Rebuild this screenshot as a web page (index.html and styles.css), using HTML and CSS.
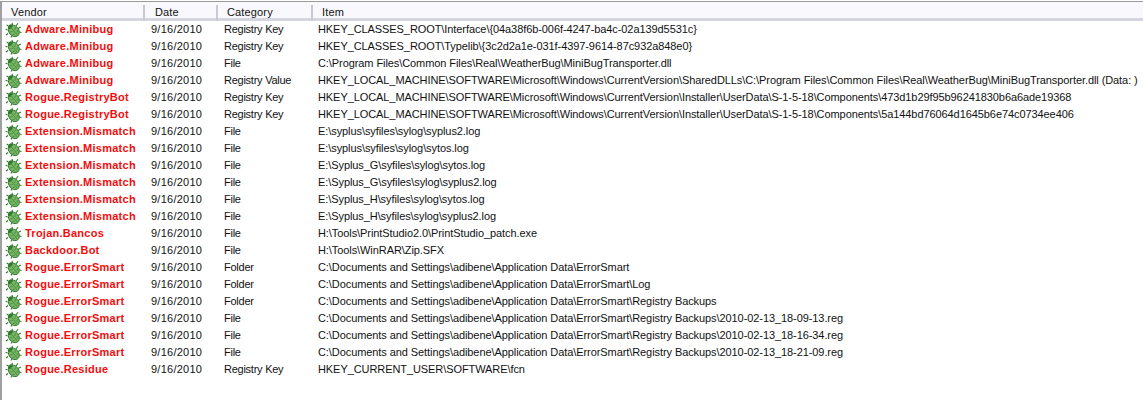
FILE: index.html
```html
<!DOCTYPE html>
<html>
<head>
<meta charset="utf-8">
<title>Scan results</title>
<link rel="stylesheet" href="styles.css">
</head>
<body>
<svg class="defs" width="0" height="0">
<symbol id="bug" viewBox="0 0 17 16">
<g stroke="#2f7a2f" stroke-width="1.1" fill="none">
<path d="M7.5 3L7 .8M11 4L13 1.2M13 6.5L15.8 5M14.5 10L16.5 10.5M2.5 8L.6 7.2M3 11.5L1 13M7 13.5L6 15.6M3.5 4L1.6 3"/>
</g>
<g transform="rotate(-40 8.5 8.5)">
<ellipse cx="8.5" cy="9" rx="4.9" ry="6.3" fill="#79b565" stroke="#2f7a2f" stroke-width=".9"/>
<ellipse cx="8.5" cy="3.4" rx="2.7" ry="1.9" fill="#2f7a2f"/>
<path d="M8.5 4V15" stroke="#3f8a3a" stroke-width=".8"/>
<path d="M5 7.5L7.2 8.8M5 11L7.2 12.2M12 7.5L9.8 8.8M12 11L9.8 12.2" stroke="#3f8a3a" stroke-width=".8"/>
</g>
</symbol>
</svg>
<div class="list">
<div class="row head">
<div class="c v">Vendor</div><div class="c d">Date</div><div class="c t">Category</div><div class="c i">Item</div>
</div>
<div class="row"><div class="c v"><svg class="ic"><use href="#bug"/></svg><b>Adware.Minibug</b></div><div class="c d">9/16/2010</div><div class="c t">Registry Key</div><div class="c i">HKEY_CLASSES_ROOT\Interface\{04a38f6b-006f-4247-ba4c-02a139d5531c}</div></div>
<div class="row"><div class="c v"><svg class="ic"><use href="#bug"/></svg><b>Adware.Minibug</b></div><div class="c d">9/16/2010</div><div class="c t">Registry Key</div><div class="c i">HKEY_CLASSES_ROOT\Typelib\{3c2d2a1e-031f-4397-9614-87c932a848e0}</div></div>
<div class="row"><div class="c v"><svg class="ic"><use href="#bug"/></svg><b>Adware.Minibug</b></div><div class="c d">9/16/2010</div><div class="c t">File</div><div class="c i">C:\Program Files\Common Files\Real\WeatherBug\MiniBugTransporter.dll</div></div>
<div class="row"><div class="c v"><svg class="ic"><use href="#bug"/></svg><b>Adware.Minibug</b></div><div class="c d">9/16/2010</div><div class="c t">Registry Value</div><div class="c i">HKEY_LOCAL_MACHINE\SOFTWARE\Microsoft\Windows\CurrentVersion\SharedDLLs\C:\Program Files\Common Files\Real\WeatherBug\MiniBugTransporter.dll (Data: )</div></div>
<div class="row"><div class="c v"><svg class="ic"><use href="#bug"/></svg><b>Rogue.RegistryBot</b></div><div class="c d">9/16/2010</div><div class="c t">Registry Key</div><div class="c i">HKEY_LOCAL_MACHINE\SOFTWARE\Microsoft\Windows\CurrentVersion\Installer\UserData\S-1-5-18\Components\473d1b29f95b96241830b6a6ade19368</div></div>
<div class="row"><div class="c v"><svg class="ic"><use href="#bug"/></svg><b>Rogue.RegistryBot</b></div><div class="c d">9/16/2010</div><div class="c t">Registry Key</div><div class="c i">HKEY_LOCAL_MACHINE\SOFTWARE\Microsoft\Windows\CurrentVersion\Installer\UserData\S-1-5-18\Components\5a144bd76064d1645b6e74c0734ee406</div></div>
<div class="row"><div class="c v"><svg class="ic"><use href="#bug"/></svg><b>Extension.Mismatch</b></div><div class="c d">9/16/2010</div><div class="c t">File</div><div class="c i">E:\syplus\syfiles\sylog\syplus2.log</div></div>
<div class="row"><div class="c v"><svg class="ic"><use href="#bug"/></svg><b>Extension.Mismatch</b></div><div class="c d">9/16/2010</div><div class="c t">File</div><div class="c i">E:\syplus\syfiles\sylog\sytos.log</div></div>
<div class="row"><div class="c v"><svg class="ic"><use href="#bug"/></svg><b>Extension.Mismatch</b></div><div class="c d">9/16/2010</div><div class="c t">File</div><div class="c i">E:\Syplus_G\syfiles\sylog\sytos.log</div></div>
<div class="row"><div class="c v"><svg class="ic"><use href="#bug"/></svg><b>Extension.Mismatch</b></div><div class="c d">9/16/2010</div><div class="c t">File</div><div class="c i">E:\Syplus_G\syfiles\sylog\syplus2.log</div></div>
<div class="row"><div class="c v"><svg class="ic"><use href="#bug"/></svg><b>Extension.Mismatch</b></div><div class="c d">9/16/2010</div><div class="c t">File</div><div class="c i">E:\Syplus_H\syfiles\sylog\sytos.log</div></div>
<div class="row"><div class="c v"><svg class="ic"><use href="#bug"/></svg><b>Extension.Mismatch</b></div><div class="c d">9/16/2010</div><div class="c t">File</div><div class="c i">E:\Syplus_H\syfiles\sylog\syplus2.log</div></div>
<div class="row"><div class="c v"><svg class="ic"><use href="#bug"/></svg><b>Trojan.Bancos</b></div><div class="c d">9/16/2010</div><div class="c t">File</div><div class="c i">H:\Tools\PrintStudio2.0\PrintStudio_patch.exe</div></div>
<div class="row"><div class="c v"><svg class="ic"><use href="#bug"/></svg><b>Backdoor.Bot</b></div><div class="c d">9/16/2010</div><div class="c t">File</div><div class="c i">H:\Tools\WinRAR\Zip.SFX</div></div>
<div class="row"><div class="c v"><svg class="ic"><use href="#bug"/></svg><b>Rogue.ErrorSmart</b></div><div class="c d">9/16/2010</div><div class="c t">Folder</div><div class="c i">C:\Documents and Settings\adibene\Application Data\ErrorSmart</div></div>
<div class="row"><div class="c v"><svg class="ic"><use href="#bug"/></svg><b>Rogue.ErrorSmart</b></div><div class="c d">9/16/2010</div><div class="c t">Folder</div><div class="c i">C:\Documents and Settings\adibene\Application Data\ErrorSmart\Log</div></div>
<div class="row"><div class="c v"><svg class="ic"><use href="#bug"/></svg><b>Rogue.ErrorSmart</b></div><div class="c d">9/16/2010</div><div class="c t">Folder</div><div class="c i">C:\Documents and Settings\adibene\Application Data\ErrorSmart\Registry Backups</div></div>
<div class="row"><div class="c v"><svg class="ic"><use href="#bug"/></svg><b>Rogue.ErrorSmart</b></div><div class="c d">9/16/2010</div><div class="c t">File</div><div class="c i">C:\Documents and Settings\adibene\Application Data\ErrorSmart\Registry Backups\2010-02-13_18-09-13.reg</div></div>
<div class="row"><div class="c v"><svg class="ic"><use href="#bug"/></svg><b>Rogue.ErrorSmart</b></div><div class="c d">9/16/2010</div><div class="c t">File</div><div class="c i">C:\Documents and Settings\adibene\Application Data\ErrorSmart\Registry Backups\2010-02-13_18-16-34.reg</div></div>
<div class="row"><div class="c v"><svg class="ic"><use href="#bug"/></svg><b>Rogue.ErrorSmart</b></div><div class="c d">9/16/2010</div><div class="c t">File</div><div class="c i">C:\Documents and Settings\adibene\Application Data\ErrorSmart\Registry Backups\2010-02-13_18-21-09.reg</div></div>
<div class="row"><div class="c v"><svg class="ic"><use href="#bug"/></svg><b>Rogue.Residue</b></div><div class="c d">9/16/2010</div><div class="c t">Registry Key</div><div class="c i">HKEY_CURRENT_USER\SOFTWARE\fcn</div></div>
</div>
</body>
</html>
```
FILE: styles.css
```css
html, body {
  margin: 0;
  height: 400px;
  overflow: hidden;
  background: #fff;
}
.defs { position: absolute; }
.list {
  height: 399px;
  margin-top: 1px;
  border-top: 1px solid #9a9a9a;
  border-left: 2px solid #a0a0a0;
  box-sizing: border-box;
  font: 11px/17px "Liberation Sans", Arial, sans-serif;
  color: #111;
  white-space: nowrap;
  overflow: hidden;
}
.row {
  display: grid;
  grid-template-columns: 141px 73px 95px 1fr;
  height: 17px;
}
.head {
  height: 16px;
  background: #f9f9fd;
  border-bottom: 3px solid #d5d5e2;
  box-sizing: content-box;
}
.c { padding-left: 8px; display: flex; align-items: center; }
.d { letter-spacing: 0.25px; }
.t { padding-left: 8px; letter-spacing: -0.25px; }
.i { padding-left: 7px; letter-spacing: -0.08px; }
.v { padding-left: 3px; }
.head .c { padding: 2px 0 0 11px; letter-spacing: 0.15px; position: relative; }
.head .d { padding-left: 12px; }
.head .v { padding-left: 9px; }
.head .c::after {
  content: "";
  position: absolute;
  left: 0;
  top: 3px;
  bottom: 0;
  width: 2px;
  background: #c9c9d3;
}
.head .v::after { display: none; }
.ic { width: 17px; height: 16px; flex: none; margin-right: 3px; }
.c b { color: #f40d0d; font-weight: 700; letter-spacing: 0.25px; }
```
